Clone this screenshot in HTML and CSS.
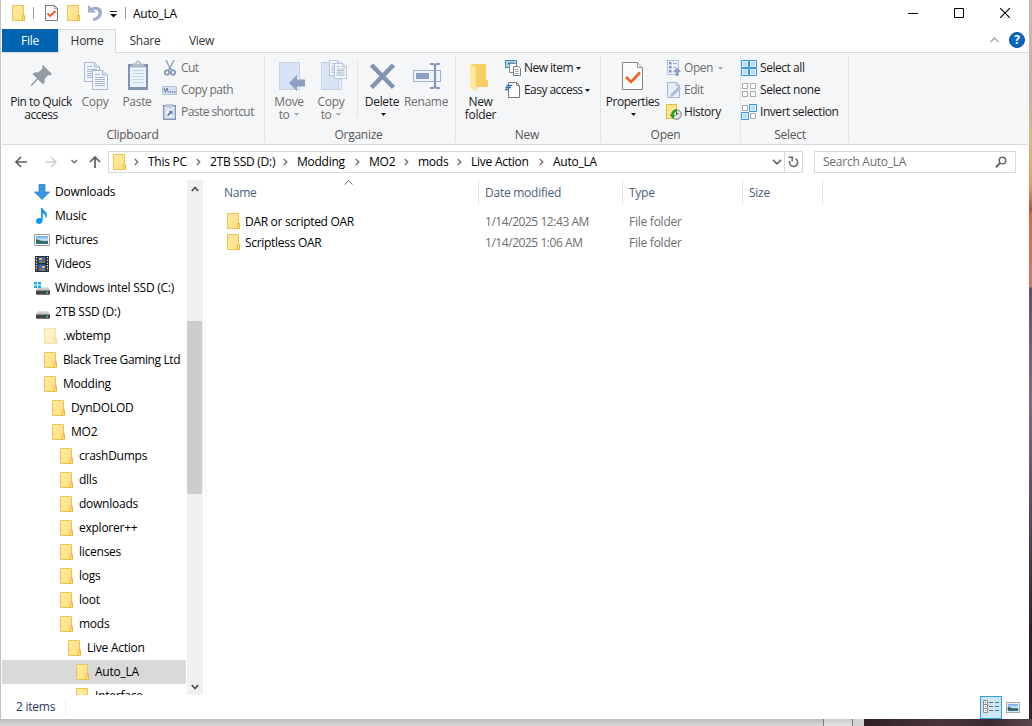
FILE: index.html
```
<!DOCTYPE html>
<html lang="en">
<head>
<meta charset="utf-8">
<title>Auto_LA</title>
<link rel="stylesheet" href="styles.css">
</head>
<body>

<svg class="defs" width="0" height="0">
    <defs>
        <linearGradient id="folder-fill" x1="0" y1="0" x2="1" y2="1">
            <stop offset="0" stop-color="#ffeaa0"/>
            <stop offset="1" stop-color="#ffdf80"/>
        </linearGradient>
        <linearGradient id="sky" x1="0" y1="0" x2="0" y2="1">
            <stop offset="0" stop-color="#6aa5f0"/>
            <stop offset=".55" stop-color="#d8ecf8"/>
            <stop offset=".6" stop-color="#4a7d78"/>
            <stop offset="1" stop-color="#2f74a8"/>
        </linearGradient>
        <linearGradient id="drive-top" x1="0" y1="0" x2="0" y2="1">
            <stop offset="0" stop-color="#e4e4e4"/>
            <stop offset="1" stop-color="#b5b5b5"/>
        </linearGradient>
    </defs>
    <symbol id="folder" viewBox="0 0 14 16">
        <path d="M.5.5h11v10h1v5H.5z" fill="url(#folder-fill)" stroke="#ebc54c"/>
        <path d="M10.5 15v-4.5h2v5" fill="#ffe18a" stroke="#e5b93c"/>
    </symbol>
    <symbol id="picture" viewBox="0 0 16 12">
        <path d="M.5.5h15v11H.5z" fill="#fff" stroke="#9b9b9b"/>
        <path d="M2 2h12v8H2z" fill="url(#sky)"/>
        <path d="M2 5l3 1 4 1.5 5 .5v1H2z" fill="#3e685f"/>
    </symbol>
    <symbol id="drive" viewBox="0 0 14 8">
        <path d="M2 0h10l2 3.500H0z" fill="url(#drive-top)"/>
        <path d="M0 3.500h14V7l-.8.800H.8L0 7z" fill="#454545"/>
        <path d="M10 5h2v1.500h-2z" fill="#35e05b"/>
    </symbol>
    <symbol id="crumb" viewBox="0 0 5 8">
        <path d="M.8 1L3.800 4l-3 3" fill="none" stroke="#6d6d6d" stroke-width="1.300"/>
    </symbol>
    <symbol id="drop" viewBox="0 0 5 3">
        <path d="M0 0h5L2.500 3z" fill="currentColor"/>
    </symbol>
    <symbol id="page" viewBox="0 0 16 20">
        <path d="M.5.5h10l5 4.500v14.500H.5z" fill="#f4f8fe" stroke="#a9b8d2"/>
        <path d="M10.500.5V5h5" fill="#d9e3f2" stroke="#a9b8d2"/>
        <path d="M3 4.500h5M3 7.500h10M3 9.500h10M3 11.500h10M3 13.500h10M3 15.500h10" stroke="#a4b4d0"/>
    </symbol>
</svg>

<div class="window">
    <div class="titlebar">
        <svg class="folder" width="14" height="16"><use href="#folder"/></svg>
        <span class="title-sep first"></span>
        <svg class="tb-check" width="13" height="16" viewBox="0 0 13 16">
            <path d="M.5.5h9l3 3v12H.5z" fill="#fbfbfb" stroke="#777"/>
            <path d="M9.500.5v3h3" fill="none" stroke="#999"/>
            <path d="M2.500 8.500L5 11l5.500-5" fill="none" stroke="#f2591b" stroke-width="1.800"/>
        </svg>
        <svg class="tb-folder" width="14" height="16"><use href="#folder"/></svg>
        <svg class="tb-undo" width="14" height="16" viewBox="0 0 13 15">
            <path d="M0 0v7h7.500L5.200 4.700C8 3.700 9.800 5 9.800 7.500c0 2.500-2 4.300-5 4.800v2.700c4.800-.5 8.200-3.500 8.200-8C13 2.500 8.500.3 3 2.500z" fill="#9dafcd"/>
        </svg>
        <svg class="tb-menu" width="7" height="7" viewBox="0 0 7 7">
            <path d="M0 .5h7" stroke="#222"/>
            <path d="M0 3h7L3.500 6.500z" fill="#111"/>
        </svg>
        <span class="title-sep"></span>
        <span class="title">Auto_LA</span>
        <div class="window-buttons">
            <svg width="10" height="10" viewBox="0 0 10 10"><path d="M0 5.500h10" stroke="#000"/></svg>
            <svg width="10" height="10" viewBox="0 0 10 10"><path d="M.5.5h9v9h-9z" fill="none" stroke="#000"/></svg>
            <svg width="10" height="10" viewBox="0 0 10 10"><path d="M0 0l10 10M10 0L0 10" stroke="#000" stroke-width="1.100"/></svg>
        </div>
    </div>

    <div class="tabs">
        <div class="tab file">File</div>
        <div class="tab active">Home</div>
        <div class="tab share">Share</div>
        <div class="tab view">View</div>
        <svg class="collapse" width="9" height="6" viewBox="0 0 9 6"><path d="M.5 5l4-4 4 4" fill="none" stroke="#a5a5a5" stroke-width="1.300"/></svg>
        <div class="help">?</div>
    </div>

    <div class="ribbon">
        <div class="group clipboard">
            <div class="tools">
                <div class="big pin">
                    <svg width="32" height="32" viewBox="0 0 32 32">
                        <path d="M19 5l9 9-2 1.500-1.500-.5-4 4c.5 2.500.2 4-1.500 5.500l-5-5-6 6-1.500.5L7 24.500l6-6-4.500-4.500c1.500-1.500 3.500-2 5.500-1.500l4.500-4L18 6.500z" fill="#929ca5"/>
                    </svg>
                    <span class="label on">Pin to Quick<br>access</span>
                </div>
                <div class="big copy">
                    <svg width="32" height="32" viewBox="0 0 32 32">
                        <use href="#page" x="5" y="2" width="16" height="20"/>
                        <use href="#page" x="13" y="10" width="16" height="20"/>
                    </svg>
                    <span class="label">Copy</span>
                </div>
                <div class="big paste">
                    <svg width="32" height="32" viewBox="0 0 32 32">
                        <path d="M7 4h20v26H7z" fill="#8194b8"/>
                        <path d="M9 7h16v20H9z" fill="#edf3fc"/>
                        <path d="M11 10.500h12M11 13.500h12M11 16.500h12M11 19.500h12M11 22.500h12" stroke="#c7d5ea"/>
                        <path d="M10.500 7V4h4c0-4 5-4 5 0h4v3z" fill="#b4bfce" stroke="#95a3b8" stroke-width=".6"/>
                        <circle cx="17" cy="3.200" r="1" fill="#f5f6f7"/>
                    </svg>
                    <span class="label">Paste</span>
                </div>
                <div class="smalls">
                    <div class="small">
                        <svg width="16" height="16" viewBox="0 0 16 16">
                            <path d="M4 0l4.500 9M12 0L7.500 9" stroke="#a0abbb" stroke-width="1.600"/>
                            <circle cx="5" cy="12.500" r="2.200" fill="none" stroke="#8799bd" stroke-width="1.800"/>
                            <circle cx="11" cy="12.500" r="2.200" fill="none" stroke="#8799bd" stroke-width="1.800"/>
                            <path d="M6 10.500L8 8l2 2.500" fill="none" stroke="#8799bd" stroke-width="1.500"/>
                        </svg>
                        <span>Cut</span>
                    </div>
                    <div class="small">
                        <svg width="16" height="16" viewBox="0 0 16 16">
                            <path d="M.5 4.500h14v8H.5z" fill="#d5e1f3" stroke="#b3c3dd"/>
                            <path d="M2 6l1.500 4.500L5 6l1.500 4.500" fill="none" stroke="#5f7599"/>
                            <path d="M8 10h1.200M10.200 10h1.200M12.400 10h1.200" stroke="#5f7599" stroke-width="1.300"/>
                        </svg>
                        <span>Copy path</span>
                    </div>
                    <div class="small">
                        <svg width="16" height="16" viewBox="0 0 16 16">
                            <path d="M1.700 1.700h11.600v13.600H1.700z" fill="#edf3fc" stroke="#8194b8" stroke-width="1.400"/>
                            <path d="M4 3.500V0h7v3.500z" fill="#b9c5d8"/>
                            <path d="M4 5h7v8H4z" fill="#fff" stroke="#a7b7d0" stroke-width=".6"/>
                            <path d="M5.500 12.500V10l2-2-1.300-1.300H10.500V11L9.200 9.700 7.500 11.200z" fill="#6d83ad"/>
                        </svg>
                        <span>Paste shortcut</span>
                    </div>
                </div>
            </div>
            <div class="group-name">Clipboard</div>
        </div>

        <div class="group organize">
            <div class="tools">
                <div class="big move">
                    <svg width="32" height="32" viewBox="0 0 32 32">
                        <path d="M6.500 2.500h20v27h-20z" fill="#d8e4f5" stroke="#c5d3e8"/>
                        <path d="M23.500 15v14.500h3V15z" fill="#e6eefa" stroke="#c5d3e8"/>
                        <path d="M16 23l8-8v4.500h8v7h-8V31z" fill="#8d9fc0"/>
                    </svg>
                    <span class="label">Move<br>to <svg class="drop" width="5" height="3"><use href="#drop"/></svg></span>
                </div>
                <div class="big copyto">
                    <svg width="32" height="32" viewBox="0 0 32 32">
                        <path d="M6.500 2.500h20v27h-20z" fill="#d8e4f5" stroke="#c5d3e8"/>
                        <path d="M23.500 19v10.500h3V19z" fill="#e6eefa" stroke="#c5d3e8"/>
                        <use href="#page" x="14" y="0" width="13" height="16"/>
                        <use href="#page" x="19" y="3" width="13" height="16"/>
                    </svg>
                    <span class="label">Copy<br>to <svg class="drop" width="5" height="3"><use href="#drop"/></svg></span>
                </div>
                <div class="inner-sep"></div>
                <div class="big delete">
                    <svg width="32" height="32" viewBox="0 0 32 32">
                        <path d="M5.500 5l22 22.500M27.500 5L5.500 27.500" stroke="#8293b4" stroke-width="4.600"/>
                    </svg>
                    <span class="label on">Delete<br><svg class="drop" width="5" height="3"><use href="#drop"/></svg></span>
                </div>
                <div class="big rename">
                    <svg width="32" height="32" viewBox="0 0 32 32">
                        <path d="M3.500 10.500h27v11h-27z" fill="#eef4fc" stroke="#a0b1ce"/>
                        <path d="M6 13h13v6H6z" fill="#8d9fc0"/>
                        <path d="M20 4h3.500l1.500 1.500L26.500 4H30M25 5.500v21M20 28h3.500l1.500-1.500 1.500 1.500H30" fill="none" stroke="#8798b9" stroke-width="2.200"/>
                    </svg>
                    <span class="label">Rename</span>
                </div>
            </div>
            <div class="group-name">Organize</div>
        </div>

        <div class="group new">
            <div class="tools">
                <div class="big newfolder">
                    <svg width="32" height="32" viewBox="0 0 32 32">
                        <path d="M6 4h16v16h2v7H12L6 28z" fill="#f8cf63"/>
                        <path d="M6 4l6 3v24l-6-3z" fill="#ffe79b"/>
                        <path d="M12 7v24" stroke="#f5d680"/>
                    </svg>
                    <span class="label on">New<br>folder</span>
                </div>
                <div class="smalls on">
                    <div class="small">
                        <svg width="16" height="16" viewBox="0 0 16 16">
                            <path d="M.5.5h11v7H.5z" fill="#a9dcf4" stroke="#4385a8"/>
                            <path d="M3 2.500h6v2H3z" fill="#2c6f96"/>
                            <path d="M4.500 3.500h7v9h-7z" fill="#fff" stroke="#8a8a8a"/>
                            <path d="M8.500 6.500h5l2 2v7h-7z" fill="#fff" stroke="#777"/>
                            <path d="M10 9.500h4" stroke="#8fa8d8"/><path d="M10 11.500h4" stroke="#e09a9a"/><path d="M10 13.500h4" stroke="#8fa8d8"/>
                        </svg>
                        <span>New item</span><svg class="drop" width="5" height="3"><use href="#drop"/></svg>
                    </div>
                    <div class="small">
                        <svg width="16" height="16" viewBox="0 0 16 16">
                            <path d="M3.500.5h8l3 3v12h-11z" fill="#fff" stroke="#777"/>
                            <path d="M11.500.5v3h3" fill="none" stroke="#888"/>
                            <path d="M1.500 3.500H7M.5 5.500H6M0 7.500h4" stroke="#2474b8" stroke-width="1.300"/>
                        </svg>
                        <span>Easy access</span><svg class="drop" width="5" height="3"><use href="#drop"/></svg>
                    </div>
                </div>
            </div>
            <div class="group-name">New</div>
        </div>

        <div class="group open">
            <div class="tools">
                <div class="big properties">
                    <svg width="32" height="32" viewBox="0 0 32 32">
                        <path d="M6.500 2.500h15l5 5v22h-20z" fill="#fbfbfb" stroke="#858585"/>
                        <path d="M21.500 2.500v5h5" fill="#eee" stroke="#999"/>
                        <path d="M10 17l5 5 9-9.500" fill="none" stroke="#f4611c" stroke-width="2.600"/>
                    </svg>
                    <span class="label on">Properties<br><svg class="drop" width="5" height="3"><use href="#drop"/></svg></span>
                </div>
                <div class="smalls">
                    <div class="small">
                        <svg width="16" height="16" viewBox="0 0 16 16">
                            <path d="M1.500.5h11v14h-11z" fill="#e9f0fb" stroke="#afbfdb"/>
                            <path d="M3 2h2.500v2.500H3zM3 6h2.500v2.500H3zM3 10h2.500v2.500H3z" fill="#7f94ba"/>
                            <path d="M7 3.500h4M7 7.500h3" stroke="#a1b2d0"/>
                            <path d="M9.500 16v-4H7l4-4.500 4 4.500h-2.500v4z" fill="#8d9fc0"/>
                        </svg>
                        <span>Open</span><svg class="drop" width="5" height="3"><use href="#drop"/></svg>
                    </div>
                    <div class="small">
                        <svg width="16" height="16" viewBox="0 0 16 16">
                            <path d="M1.500.5h9l3 3v12h-12z" fill="#e6eefa" stroke="#a6b7d4"/>
                            <path d="M10.500.5v3h3" fill="none" stroke="#a6b7d4"/>
                            <path d="M4 15.500l1-3.500 8-8 2 2.500-8 7.500z" fill="#a9badb"/>
                        </svg>
                        <span>Edit</span>
                    </div>
                    <div class="small on">
                        <svg width="16" height="16" viewBox="0 0 16 16">
                            <path d="M.5.500h10v11l-2 3h-8z" fill="#ffe48f" stroke="#e8bc3e"/>
                            <circle cx="10.500" cy="10.500" r="4.800" fill="#e4e4e4" stroke="#777"/>
                            <path d="M10.500 7.500v3.500l2-2" fill="none" stroke="#555"/>
                            <path d="M11 5.500c-4 0-5.500 2-5.500 5H3.500L6.800 15l2.700-4H7.800c0-2 1-3.200 3.200-3.300z" fill="#23a423"/>
                        </svg>
                        <span>History</span>
                    </div>
                </div>
            </div>
            <div class="group-name">Open</div>
        </div>

        <div class="group select">
            <div class="tools">
                <div class="smalls on">
                    <div class="small">
                        <svg width="16" height="16" viewBox="0 0 16 16">
                            <path d="M.5.5h7v7h-7zM8.500.5h7v7h-7zM.5 8.500h7v7h-7zM8.500 8.500h7v7h-7z" fill="#fff" stroke="#3494e0"/>
                            <path d="M1.500 1.500h5v5h-5zM9.500 1.500h5v5h-5zM1.500 9.500h5v5h-5zM9.500 9.500h5v5h-5z" fill="#b9def9"/>
                        </svg>
                        <span>Select all</span>
                    </div>
                    <div class="small">
                        <svg width="16" height="16" viewBox="0 0 16 16">
                            <path d="M1.500 1.500h5v5h-5zM9.500 1.500h5v5h-5zM1.500 9.500h5v5h-5zM9.500 9.500h5v5h-5z" fill="#fff" stroke="#a8a8a8"/>
                        </svg>
                        <span>Select none</span>
                    </div>
                    <div class="small">
                        <svg width="16" height="16" viewBox="0 0 16 16">
                            <path d="M1.500 1.500h5v5h-5zM9.500 9.500h5v5h-5z" fill="#fff" stroke="#a8a8a8"/>
                            <path d="M8.500.5h7v7h-7zM.5 8.500h7v7h-7z" fill="#fff" stroke="#3494e0"/>
                            <path d="M9.500 1.500h5v5h-5zM1.500 9.500h5v5h-5z" fill="#b9def9"/>
                        </svg>
                        <span>Invert selection</span>
                    </div>
                </div>
            </div>
            <div class="group-name">Select</div>
        </div>
    </div>

    <div class="addressbar">
        <svg class="nav-icons" width="90" height="14" viewBox="0 0 90 14">
            <path d="M12 7H1M6 2L1 7l5 5" fill="none" stroke="#5d5d5d" stroke-width="1.600"/>
            <path d="M30 7h11M36 2l5 5-5 5" fill="none" stroke="#d2d2d2" stroke-width="1.600"/>
            <path d="M56.500 5l2.700 2.700L61.900 5" fill="none" stroke="#6d6d6d" stroke-width="1.400"/>
            <path d="M80 13V2M75 7l5-5 5 5" fill="none" stroke="#5d5d5d" stroke-width="1.700"/>
        </svg>
        <div class="path">
            <svg class="folder" width="14" height="16"><use href="#folder"/></svg>
            <svg class="crumb" width="5" height="8"><use href="#crumb"/></svg>
            <span class="c-pc">This PC</span>
            <svg class="crumb" width="5" height="8"><use href="#crumb"/></svg>
            <span class="c-drive">2TB SSD (D:)</span>
            <svg class="crumb" width="5" height="8"><use href="#crumb"/></svg>
            <span class="c-modding">Modding</span>
            <svg class="crumb" width="5" height="8"><use href="#crumb"/></svg>
            <span class="c-mo">MO2</span>
            <svg class="crumb" width="5" height="8"><use href="#crumb"/></svg>
            <span class="c-mods">mods</span>
            <svg class="crumb" width="5" height="8"><use href="#crumb"/></svg>
            <span class="c-live">Live Action</span>
            <svg class="crumb" width="5" height="8"><use href="#crumb"/></svg>
            <span>Auto_LA</span>
            <svg class="history" width="10" height="6" viewBox="0 0 10 6"><path d="M1 .8l4 4 4-4" fill="none" stroke="#6a6a6a" stroke-width="1.700"/></svg>
            <div class="refresh">
                <svg width="11" height="12" viewBox="0 0 11 12"><path d="M7.500 2.700A4.100 4.100 0 1 1 1.700 5M.5 1.200H4.300V5.200" fill="none" stroke="#6a6a6a" stroke-width="1.600"/></svg>
            </div>
        </div>
        <div class="search">
            <span>Search Auto_LA</span>
            <svg width="12" height="12" viewBox="0 0 12 12"><circle cx="7.500" cy="4.500" r="3.300" fill="none" stroke="#6a6a6a" stroke-width="1.500"/><path d="M5 7L.8 11.200" stroke="#6a6a6a" stroke-width="2"/></svg>
        </div>
    </div>

    <div class="main">
        <div class="tree">
            <div class="node lib">
                <svg width="16" height="16" viewBox="0 0 16 16"><path d="M5 .5h6V8h4.500L8 15.500.5 8H5z" fill="#3a97e8" stroke="#2d80c9" stroke-width=".8"/></svg>
                <span>Downloads</span>
            </div>
            <div class="node lib">
                <svg width="16" height="16" viewBox="0 0 16 16"><path d="M7 0h1.700c.3 3 4.300 3.500 4.300 7 0 1.500-.5 2.500-1.500 3.500C12 7.500 11 6 8.700 5.500V12c0 5-6.700 5-6.700 1.200C2 10.500 5 9.500 7 10.500z" fill="#0f97f2"/></svg>
                <span>Music</span>
            </div>
            <div class="node lib">
                <svg width="16" height="12"><use href="#picture"/></svg>
                <span>Pictures</span>
            </div>
            <div class="node lib">
                <svg width="16" height="16" viewBox="0 0 16 16">
                    <path d="M1 0h14v16H1z" fill="#2c2c2c"/>
                    <path d="M2.500 1v14M13.500 1v14" stroke="#eee" stroke-width="1.200" stroke-dasharray="1.300 1.400"/>
                    <path d="M4.500 1h7v6h-7zM4.500 8.500h7v6.500h-7z" fill="#316bc9"/>
                    <path d="M5 2h3v2H5zM8 10h3v2H8z" fill="#e8b93a"/>
                    <path d="M8 3.500h3v2H8zM5 12h3v2H5z" fill="#c24936"/>
                    <path d="M5 5.500h5V7H5zM7 13.500h4V15H7z" fill="#4aa04d"/>
                </svg>
                <span>Videos</span>
            </div>
            <div class="node lib">
                <svg width="16" height="16" viewBox="0 0 16 16">
                    <use href="#drive" x="2" y="7" width="14" height="8"/>
                    <path d="M0 2h3v2.500H0zM4 2h3v2.500H4zM0 5.500h3V8H0zM4 5.500h3V8H4z" fill="#18aeea"/>
                </svg>
                <span>Windows intel SSD (C:)</span>
            </div>
            <div class="node lib">
                <svg width="16" height="16" viewBox="0 0 16 16"><use href="#drive" x="2" y="7" width="14" height="8"/></svg>
                <span>2TB SSD (D:)</span>
            </div>
            <div class="node l1 hidden-item"><svg class="folder" width="14" height="16"><use href="#folder"/></svg><span>.wbtemp</span></div>
            <div class="node l1"><svg class="folder" width="14" height="16"><use href="#folder"/></svg><span class="long">Black Tree Gaming Ltd</span></div>
            <div class="node l1"><svg class="folder" width="14" height="16"><use href="#folder"/></svg><span>Modding</span></div>
            <div class="node l2"><svg class="folder" width="14" height="16"><use href="#folder"/></svg><span>DynDOLOD</span></div>
            <div class="node l2"><svg class="folder" width="14" height="16"><use href="#folder"/></svg><span>MO2</span></div>
            <div class="node l3"><svg class="folder" width="14" height="16"><use href="#folder"/></svg><span>crashDumps</span></div>
            <div class="node l3"><svg class="folder" width="14" height="16"><use href="#folder"/></svg><span>dlls</span></div>
            <div class="node l3"><svg class="folder" width="14" height="16"><use href="#folder"/></svg><span>downloads</span></div>
            <div class="node l3"><svg class="folder" width="14" height="16"><use href="#folder"/></svg><span>explorer++</span></div>
            <div class="node l3"><svg class="folder" width="14" height="16"><use href="#folder"/></svg><span>licenses</span></div>
            <div class="node l3"><svg class="folder" width="14" height="16"><use href="#folder"/></svg><span>logs</span></div>
            <div class="node l3"><svg class="folder" width="14" height="16"><use href="#folder"/></svg><span>loot</span></div>
            <div class="node l3"><svg class="folder" width="14" height="16"><use href="#folder"/></svg><span>mods</span></div>
            <div class="node l4"><svg class="folder" width="14" height="16"><use href="#folder"/></svg><span>Live Action</span></div>
            <div class="node l5 selected"><svg class="folder" width="14" height="16"><use href="#folder"/></svg><span>Auto_LA</span></div>
            <div class="node l5"><svg class="folder" width="14" height="16"><use href="#folder"/></svg><span>Interface</span></div>
        </div>
        <div class="scrollbar">
            <svg width="8" height="6" viewBox="0 0 8 6"><path d="M.8 5L4 1.500 7.200 5" fill="none" stroke="#505050" stroke-width="1.800"/></svg>
            <div class="thumb"></div>
            <svg width="8" height="6" viewBox="0 0 8 6"><path d="M.8 1L4 4.500 7.200 1" fill="none" stroke="#505050" stroke-width="1.800"/></svg>
        </div>
        <div class="files">
            <div class="row head">
                <div class="name">Name<svg class="sort" width="9" height="5" viewBox="0 0 9 5"><path d="M.7 4.500l3.800-3.800 3.800 3.800" fill="none" stroke="#666"/></svg></div>
                <div>Date modified</div>
                <div>Type</div>
                <div>Size</div>
            </div>
            <div class="row">
                <div class="name"><svg class="folder" width="14" height="16"><use href="#folder"/></svg><span>DAR or scripted OAR</span></div>
                <div class="date">1/14/2025 12:43 AM</div>
                <div>File folder</div>
            </div>
            <div class="row">
                <div class="name"><svg class="folder" width="14" height="16"><use href="#folder"/></svg><span>Scriptless OAR</span></div>
                <div class="date">1/14/2025 1:06 AM</div>
                <div>File folder</div>
            </div>
        </div>
    </div>

    <div class="statusbar">
        <span class="count">2 items</span>
        <div class="mode active">
            <svg width="16" height="14" viewBox="0 0 16 14">
                <path d="M.5.500h4v12h-4zM.5 4.500h4M.5 8.500h4" fill="#fff" stroke="#8c8c8c"/>
                <path d="M2 2.500h1" stroke="#3d7d54"/><path d="M2 6.500h1" stroke="#336fe0"/><path d="M2 10.500h1" stroke="#d22"/>
                <path d="M6 2.500h4M12 2.500h4M6 6.500h4M12 6.500h4M6 10.500h4M12 10.500h4" stroke="#6f6f6f"/>
            </svg>
        </div>
        <svg class="thumbs" width="14" height="11" viewBox="0 0 16 12" preserveAspectRatio="none"><use href="#picture"/></svg>
    </div>
</div>

<div class="desktop-right"></div>
<div class="desktop-bottom">
    <div class="behind"></div>
    <div class="behind-scroll"></div>
    <div class="behind-edge"></div>
    <div class="wallpaper"></div>
</div>

</body>
</html>
```
FILE: styles.css
```
* {
    box-sizing: border-box;
}
body {
    margin: 0;
    width: 1032px;
    height: 726px;
    overflow: hidden;
    display: grid;
    grid-template-columns: 1029px 3px;
    grid-template-rows: 719px 7px;
    font-family: "Open Sans", "Noto Sans", sans-serif;
    font-size: 12px;
    line-height: 16px;
    letter-spacing: -0.25px;
    color: #000;
}
svg {
    display: block;
    flex: none;
}
.defs {
    position: absolute;
}
span {
    white-space: nowrap;
}
.window {
    display: flex;
    flex-direction: column;
    background: #fff;
    border-left: 1px solid #c4c4c4;
    padding-left: 1px;
    min-width: 0;
}

/* title bar */
.titlebar {
    display: flex;
    align-items: center;
    height: 29px;
    padding: 0 19px 3px 10px;
}
.title-sep {
    width: 1px;
    height: 12px;
    background: #999;
}
.title-sep.first {
    margin: 0 11px 0 7px;
}
.tb-folder {
    margin: 0 7px 0 9px;
}
.tb-menu {
    margin: 3px 8px 0 8px;
}
.title {
    margin-left: 7px;
    padding-top: 1px;
}
.window-buttons {
    display: flex;
    gap: 36px;
    margin-left: auto;
}

/* tabs */
.tabs {
    display: flex;
    height: 24px;
    padding-right: 4px;
    border-bottom: 1px solid #dadbdc;
}
.tab {
    height: 23px;
    line-height: 24px;
    text-align: center;
    color: #333;
}
.tab.file {
    width: 56px;
    background: #0063b1;
    color: #fff;
}
.tab.active {
    width: 58px;
    height: 24px;
    background: #f5f6f7;
    border: 1px solid #dadbdc;
    border-bottom: none;
    line-height: 22px;
}
.tab.share {
    width: 58px;
}
.tab.view {
    width: 55px;
}
.collapse {
    margin: 8px 10px 0 auto;
}
.help {
    width: 16px;
    height: 16px;
    margin-top: 3px;
    border-radius: 50%;
    background: #0866c6;
    border: 1px solid #07509b;
    color: #fff;
    font-weight: bold;
    line-height: 14px;
    text-align: center;
}

/* ribbon */
.ribbon {
    display: flex;
    height: 92px;
    padding-bottom: 2px;
    margin-right: 1px;
    background: #f5f6f7;
    border-bottom: 1px solid #dadbdc;
}
.group {
    display: flex;
    flex-direction: column;
    margin-top: 2px;
    border-right: 1px solid #e2e3e4;
}
.clipboard {
    width: 263px;
    padding-left: 6px;
}
.organize {
    width: 191px;
    padding-left: 3px;
}
.new {
    width: 145px;
    padding-left: 4px;
}
.open {
    width: 140px;
    padding-left: 3px;
}
.select {
    width: 108px;
}
.tools {
    display: flex;
    flex: none;
    height: 72px;
    color: #6d6d6d;
    letter-spacing: -0.45px;
}
.on {
    color: #1b1b1b;
}
.big {
    display: flex;
    flex-direction: column;
    align-items: center;
    padding-top: 5px;
    text-align: center;
}
.big > svg {
    margin-right: 1px;
}
.label {
    margin-top: 3px;
    line-height: 13px;
    letter-spacing: -0.3px;
}
.pin .label, .properties .label {
    letter-spacing: -0.45px;
}
.pin > svg {
    margin-right: 3px;
}
.label .drop {
    display: inline-block;
    vertical-align: 3px;
    margin-left: 2px;
}
.drop {
    color: #aaa;
}
.on .drop {
    color: #1b1b1b;
}
.pin {
    width: 66px;
}
.copy, .paste, .move, .copyto {
    width: 42px;
}
.inner-sep {
    width: 1px;
    height: 56px;
    margin: 6px 3px 0 5px;
    background: #e2e3e4;
}
.delete {
    width: 42px;
}
.rename {
    width: 46px;
}
.newfolder {
    width: 41px;
}
.properties {
    width: 57px;
}
.smalls {
    margin: 2px 0 0 4px;
}
.select .smalls {
    margin-left: 0;
}
.small {
    display: flex;
    align-items: center;
    gap: 3px;
    height: 22px;
}
.open .smalls {
    margin-left: 5px;
}
.clipboard .small, .new .small {
    letter-spacing: -0.55px;
}
.open .small {
    gap: 2px;
}
.small .drop {
    margin-left: 0;
}
.open .small .drop {
    margin-left: 3px;
}
.group-name {
    height: 14px;
    line-height: 16px;
    text-align: center;
    color: #555;
}
.clipboard .group-name {
    padding-right: 7px;
}
.organize .group-name, .new .group-name {
    padding-right: 6px;
}
.open .group-name {
    padding-right: 13px;
}
.select .group-name {
    padding-right: 9px;
}

/* address bar */
.addressbar {
    display: flex;
    align-items: center;
    height: 35px;
    padding: 0 13px 1px 13px;
}
.path {
    display: flex;
    align-items: center;
    width: 695px;
    height: 22px;
    margin-left: 3px;
    border: 1px solid #d9d9d9;
    padding-left: 4px;
}
.crumb {
    margin-right: 9px;
}
.path > .folder {
    margin-right: 7px;
}
.c-pc {
    width: 48px;
}
.c-drive {
    width: 73px;
}
.c-modding {
    width: 58px;
}
.c-mo {
    width: 35px;
}
.c-mods {
    width: 39px;
}
.c-live {
    width: 68px;
}
.history {
    margin-left: auto;
}
.refresh {
    display: flex;
    align-items: center;
    justify-content: center;
    width: 18px;
    height: 20px;
    margin-left: 2px;
    border-left: 1px solid #d9d9d9;
}
.search {
    display: flex;
    align-items: center;
    justify-content: space-between;
    width: 202px;
    height: 22px;
    margin-left: 11px;
    padding: 0 8px;
    border: 1px solid #d9d9d9;
    color: #6d6d6d;
}

/* folder tree */
.main {
    display: flex;
    height: 515px;
}
.tree {
    width: 184px;
    overflow: hidden;
}
.node {
    display: flex;
    align-items: center;
    height: 24px;
}
.node .folder {
    margin-right: 5px;
}
.node .long {
    letter-spacing: -0.38px;
}
.lib {
    padding-left: 32px;
    gap: 5px;
}
.l1 {
    padding-left: 42px;
}
.l2 {
    padding-left: 50px;
}
.l3 {
    padding-left: 58px;
}
.l4 {
    padding-left: 66px;
}
.l5 {
    padding-left: 74px;
}
.selected {
    background: #d9d9d9;
}
.hidden-item .folder {
    opacity: 0.5;
}
.scrollbar {
    display: flex;
    flex-direction: column;
    align-items: center;
    width: 17px;
    margin-left: 1px;
    padding: 6px 1px 5px 0;
    background: #f0f0f0;
    border-right: 1px solid #fff;
}
.thumb {
    width: 15px;
    height: 173px;
    margin: 129px 0 auto;
    background: #cdcdcd;
}

/* file list */
.files {
    flex: 1;
    margin-left: 1px;
    border-left: 1px solid #f3f3f3;
}
.row {
    display: grid;
    grid-template-columns: 273px 144px 120px 80px;
    align-items: center;
    height: 21px;
    color: #6d6d6d;
}
.row > div {
    padding-left: 6px;
}
.row .name {
    display: flex;
    align-items: center;
    gap: 4px;
    padding-left: 21px;
    color: #000;
    letter-spacing: -0.3px;
}
.row .folder {
    margin-bottom: 1px;
}
.date {
    letter-spacing: -0.45px;
}
.head {
    height: 25px;
    margin-bottom: 6px;
    color: #4c607a;
}
.head > div {
    height: 25px;
    line-height: 25px;
    border-right: 1px solid #e5e5e5;
}
.head .name {
    position: relative;
    padding-left: 18px;
    color: #4c607a;
    letter-spacing: -0.25px;
}
.sort {
    position: absolute;
    left: 138px;
    top: 0;
}

/* status bar */
.statusbar {
    display: flex;
    align-items: center;
    height: 24px;
    padding: 0 9px 0 14px;
    color: #1e395b;
}
.count {
    padding-right: 10px;
    border-right: 1px solid #f0f0f0;
}
.mode {
    display: flex;
    align-items: center;
    justify-content: center;
    width: 22px;
    height: 23px;
    margin-left: auto;
}
.mode.active {
    background: #cce8f6;
    border: 1px solid #2ba0d9;
}
.thumbs {
    margin-left: 4px;
}

/* what shows around the window */
.desktop-right {
    background: linear-gradient(#cdb9b1 0, #cdaaa0 100px, #d7b981 135px, #dfa26b 185px, #b0573d 209px, #d06a45 215px, #cc7a66 287px, #655064 288px, #806a80 400px, #584256 530px, #2d1c28 640px, #33232c 719px);
}
.desktop-bottom {
    grid-column: 1 / 3;
    display: flex;
}
.behind {
    width: 823px;
    background: linear-gradient(#bcbcbc, #d9d9d9);
}
.behind-scroll {
    width: 29px;
    border-left: 1px solid #777;
    background: linear-gradient(#cbcbcb, #e5e5e5);
}
.behind-edge {
    width: 12px;
    border-left: 1px solid #777;
    background: #d2d2d2;
}
.wallpaper {
    flex: 1;
    background: linear-gradient(90deg, #302126, #49353c 45%, #3b2a32 75%, #5b454c);
}
```
